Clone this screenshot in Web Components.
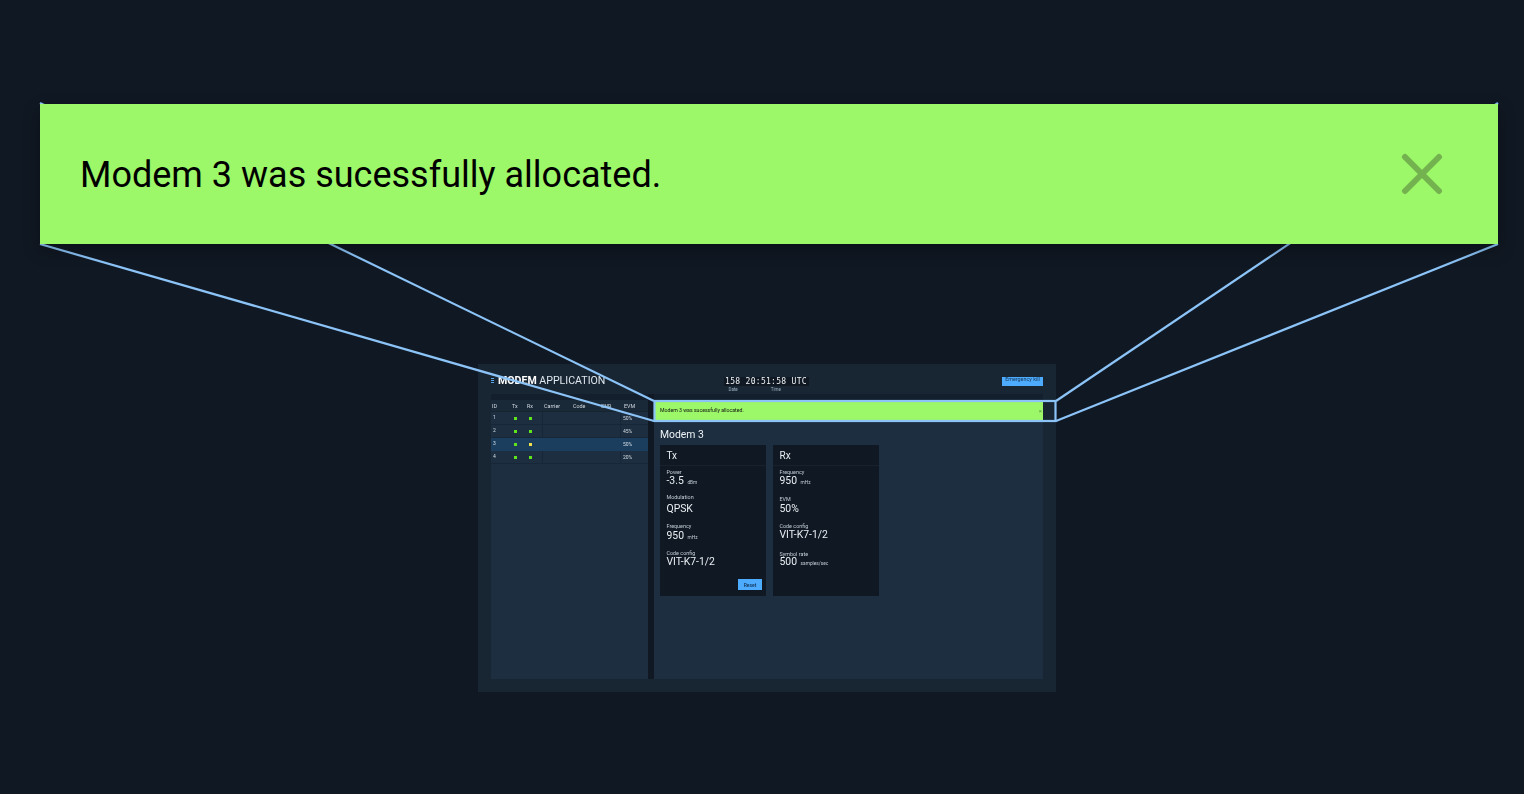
<!DOCTYPE html>
<html><head><meta charset="utf-8"><title>Modem</title>
<style>
html,body{margin:0;padding:0;background:#101823;}
body{width:1524px;height:794px;overflow:hidden;font-family:Roboto,"Liberation Sans",sans-serif;color:#fff;}
</style></head><body>
<zoom-canvas>
  <modem-screen></modem-screen>
  <zoom-lines></zoom-lines>
  <alert-banner slot="banner" text="Modem 3 was sucessfully allocated."></alert-banner>
</zoom-canvas>
<script>
function def(name, css, html){
  customElements.define(name, class extends HTMLElement{
    connectedCallback(){
      if(this.shadowRoot) return;
      const r=this.attachShadow({mode:'open'});
      const a=n=>this.getAttribute(n)||'';
      r.innerHTML='<style>'+css+'</style>'+(typeof html==='function'?html(a):html);
    }
  });
}
def('zoom-canvas',':host{display:block;position:relative;width:1524px;height:794px;background:#101823;overflow:hidden}','<slot></slot><slot name="banner"></slot>');
def('alert-banner',`:host{position:absolute;left:40px;top:104px;width:1458px;height:140px;background:#9cf769;color:#000;display:flex;align-items:center;justify-content:space-between;box-sizing:border-box;padding:0 55px 0 40px;box-shadow:0 6px 16px rgba(0,0,0,.3);font:400 36px Roboto,sans-serif}
span{position:relative;top:1px}
svg{display:block;width:42px;height:42px}`,a=>`<span>${a('text')}</span><svg viewBox="0 0 42 42"><path d="M4 4 L38 38 M38 4 L4 38" stroke="#73b24f" stroke-width="6" stroke-linecap="round" fill="none"/></svg>`);
def('zoom-lines',`:host{position:absolute;left:0;top:0;width:1524px;height:794px;display:block;pointer-events:none}
svg{display:block}`,`<svg width="1524" height="794" viewBox="0 0 1524 794" fill="none" stroke="#8cc4f8" stroke-width="2.2">
<path d="M40 103 L654 401"/><path d="M40 244 L654 421"/><path d="M1498 103 L1056 401"/><path d="M1498 244 L1056 421"/>
<rect x="654.5" y="401" width="401" height="20"/></svg>`);
def('modem-screen',`:host{position:absolute;left:478px;top:364px;width:578px;height:328px;background:#182634;display:flex;flex-direction:column;box-sizing:border-box;padding:0 13px 13px;overflow:hidden;filter:blur(.45px);font-family:Roboto,sans-serif}
.body{flex:1;display:flex;min-height:0;background:#101823}
`,`<app-header></app-header><div class="body"><modem-table></modem-table><modem-detail></modem-detail></div>`);
def('app-header',`:host{display:grid;grid-template-columns:1fr auto 1fr;height:30px;box-sizing:border-box;padding-top:10px;align-items:start}
.l{display:flex;align-items:center;gap:4px;height:14px}
.ham{display:flex;flex-direction:column;gap:1px;width:3px;position:relative;top:-1px}
.ham i{display:block;height:1px;background:#5aa6e6}
.t{font-size:10.6px;line-height:14px;color:#dfe7ee;white-space:nowrap;font-weight:400}
.t b{font-weight:700;color:#fff}
.c{margin-top:3px;width:85px;position:relative;left:-1px}
.clock{background:#101823;font:400 8px/9px "DejaVu Sans Mono","Liberation Mono",monospace;letter-spacing:.3px;color:#eef2f5;height:9px;text-align:center;white-space:pre}
.lb{display:flex;font-size:4.5px;line-height:7px;color:#9fb0bf;padding-left:5px;gap:33px;}
.b{justify-self:end;margin-top:3px;width:41px;height:9px;background:#4dacff;color:#173654;font-size:5.4px;line-height:5px;text-align:center;overflow:hidden;white-space:nowrap}
`,`<div class="l"><span class="ham"><i></i><i></i><i></i></span><span class="t"><b>MODEM</b> APPLICATION</span></div>
<div class="c"><div class="clock">158 20:51:58 UTC</div><div class="lb"><span>Date</span><span>Time</span></div></div>
<div class="b">Emergency kill</div>`);
def('modem-table',`:host{display:block;width:157px;background:#1c2e40;font-family:Roboto,sans-serif;color:#dfe6ec}
.top{height:6px;background:#141f2d}
.hd{display:grid;grid-template-columns:20px 15px 17px 29px 28px 23px 1fr;height:12px;background:#1a2938;font-size:5.4px;line-height:12px;padding-left:1px;border-bottom:1px solid #16242f;box-sizing:border-box;color:#cfd8e0}
`,`<div class="top"></div><div class="hd"><span>ID</span><span>Tx</span><span>Rx</span><span>Carrier</span><span>Code</span><span>SNR</span><span>EVM</span></div>
<modem-row n="1" evm="50%"></modem-row><modem-row n="2" evm="45%"></modem-row><modem-row n="3" evm="50%" sel="1"></modem-row><modem-row n="4" evm="20%"></modem-row>`);
def('modem-row',`:host{display:grid;grid-template-columns:21px 15px 11px 1fr 28px;height:13px;box-sizing:border-box;border-bottom:1px solid #182737;font-size:5px;line-height:10px;color:#d5dde4}
:host([sel]){background:#1b3e5e;border-bottom-color:#1b3e5e}
.n{padding-left:2px}.d{display:flex;align-items:center;padding-top:1px}
.d i{display:block;width:3px;height:3px;background:#5fe51c;margin-left:2px}
.y i{background:#f0e04a}
.e{border-left:1px solid #182737;padding-left:2px;padding-top:1px;box-sizing:border-box}
.m{border-left:1px solid #182737;margin-left:4px}
:host([sel]) .m,:host([sel]) .e{border-left-color:#1b3e5e}
`,a=>`<span class="n">${a('n')}</span><span class="d"><i></i></span><span class="d ${a('sel')?'y':''}"><i></i></span><span class="m"></span><span class="e">${a('evm')}</span>`);
def('modem-detail',`:host{display:flex;flex-direction:column;flex:1;margin-left:6px;background:#1c2e40;font-family:Roboto,sans-serif}
.top{height:6px;background:#141f2d}
.al{height:21px;background:#9cf769;color:#111;font-size:5.2px;line-height:21px;padding-left:6px;display:flex;justify-content:space-between}
.al i{font-style:normal;color:#5c8f40;font-size:6px;padding-right:1px}
h2{margin:8px 0 0 6px;font-weight:400;font-size:10.4px;line-height:12px;color:#eef2f5}
.cards{display:flex;gap:7px;margin:4px 0 0 6px}
`,`<div class="top"></div><div class="al"><span>Modem 3 was sucessfully allocated.</span><i>×</i></div><h2>Modem 3</h2>
<div class="cards">
<status-card title="Tx" btn="Reset">
 <field-item label="Power" value="-3.5" unit="dBm" gap="0" vm="-1"></field-item>
 <field-item label="Modulation" value="QPSK" gap="5" vm="2"></field-item>
 <field-item label="Frequency" value="950" unit="mHz" gap="8" vm="0"></field-item>
 <field-item label="Code config" value="VIT-K7-1/2" gap="6" vm="-1"></field-item>
</status-card>
<status-card title="Rx">
 <field-item label="Frequency" value="950" unit="mHz" gap="0" vm="-1"></field-item>
 <field-item label="EVM" value="50%" gap="7" vm="0"></field-item>
 <field-item label="Code config" value="VIT-K7-1/2" gap="8" vm="-1"></field-item>
 <field-item label="Symbol rate" value="500" unit="samples/sec" gap="10" vm="-2"></field-item>
</status-card></div>`);
def('status-card',`:host{display:block;position:relative;width:106px;height:151px;background:#101823;box-sizing:border-box}
.h{height:20px;border-bottom:1px solid #17222e;font-size:10px;line-height:21px;padding-left:6.5px;color:#e9eef2}
.b{padding:3px 6.5px 0}
button{position:absolute;right:4px;bottom:6px;width:24px;height:11px;border:0;padding:0;background:#4dacff;color:#12304d;font:500 5px Roboto,sans-serif}
`,a=>`<div class="h">${a('title')}</div><div class="b"><slot></slot></div>${a('btn')?`<button>${a('btn')}</button>`:''}`);
def('field-item',`:host{display:block;color:#e9eef2}
.l{font-size:5.4px;line-height:7px;color:#c3ced8}
.v{font-size:10.4px;line-height:12px;white-space:nowrap}
.u{font-size:4.8px;margin-left:1px;color:#c3ced8}
`,a=>`<style>:host{margin-top:${a('gap')}px}.v{margin-top:${a('vm')}px}</style><div class="l">${a('label')}</div><div class="v">${a('value')}${a('unit')?` <span class="u">${a('unit')}</span>`:''}</div>`);
</script>
</body></html>
